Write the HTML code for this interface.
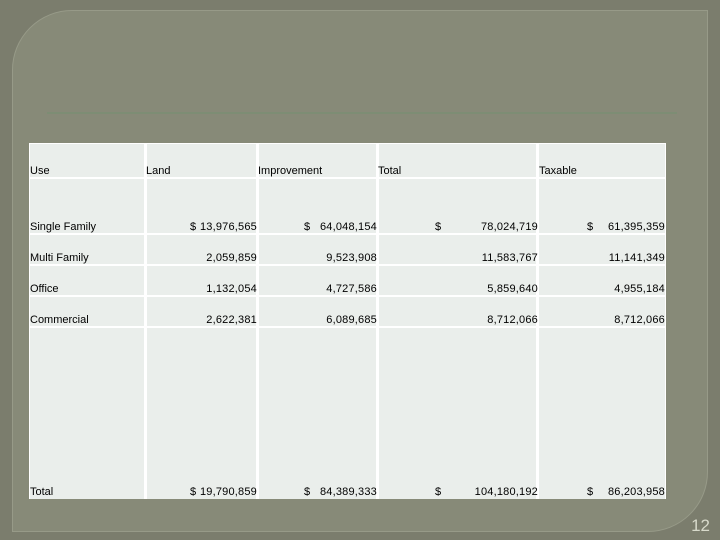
<!DOCTYPE html>
<html><head><style>
body{margin:0;width:720px;height:540px;background:#7b7d6d;position:relative;overflow:hidden;font-family:"Liberation Sans",Arial,sans-serif;font-size:11px;color:#000}
.panel{position:absolute;left:12px;top:10px;width:694px;height:520px;background:#878a78;border:1px solid #979a88;border-radius:60px 0 60px 0}
.rule{position:absolute;left:47px;top:112px;width:630px;height:2px;background:#7d8d74}
.c{position:absolute;background:#eaeeeb}
.x{position:absolute;white-space:nowrap;line-height:12px}
.num{position:absolute;white-space:nowrap;text-align:right;line-height:12px;letter-spacing:0.2px}
.pg{position:absolute;right:10px;bottom:4px;color:#d8dacb;font-size:17px}
.t{position:absolute;left:29px;top:143px;width:637px;height:356px;background:#fff}
</style></head><body>
<div class="panel"></div>
<div class="rule"></div>
<div class="t"></div>
<div class="pg">12</div>
<script>
var xs=[29,145,257,377,537,666], ys=[143,177,233,264,295,326,499];
var t=document.body;
for(var r=0;r<6;r++)for(var c=0;c<5;c++){var d=document.createElement('div');d.className='c';
var x0=xs[c]+(c?2:1),y0=ys[r]+(r?2:1);d.style.left=x0+'px';d.style.top=y0+'px';d.style.width=(xs[c+1]-x0-1)+'px';d.style.height=(ys[r+1]-y0)+'px';t.appendChild(d);}
function tx(s,x,y){var d=document.createElement('div');d.className='x';d.textContent=s;d.style.left=x+'px';d.style.top=y+'px';t.appendChild(d);}
function nx(s,r,y){var d=document.createElement('div');d.className='num';d.textContent=s;d.style.right=(720-r)+'px';d.style.top=y+'px';t.appendChild(d);}
tx('Use',30,165);tx('Land',146,165);tx('Improvement',258,165);tx('Total',378,165);tx('Taxable',539,165);
var rows=[['Single Family',221,['13,976,565','64,048,154','78,024,719','61,395,359'],1],
['Multi Family',252,['2,059,859','9,523,908','11,583,767','11,141,349']],
['Office',283,['1,132,054','4,727,586','5,859,640','4,955,184']],
['Commercial',314,['2,622,381','6,089,685','8,712,066','8,712,066']],
['Total',486,['19,790,859','84,389,333','104,180,192','86,203,958'],1]];
var rr=[257,377,538,665],dl=[190,304,435,587];
rows.forEach(function(w){tx(w[0],30,w[1]);for(var i=0;i<4;i++){nx(w[2][i],rr[i],w[1]);if(w[3])tx('$',dl[i],w[1]);}});
</script>
</body></html>
